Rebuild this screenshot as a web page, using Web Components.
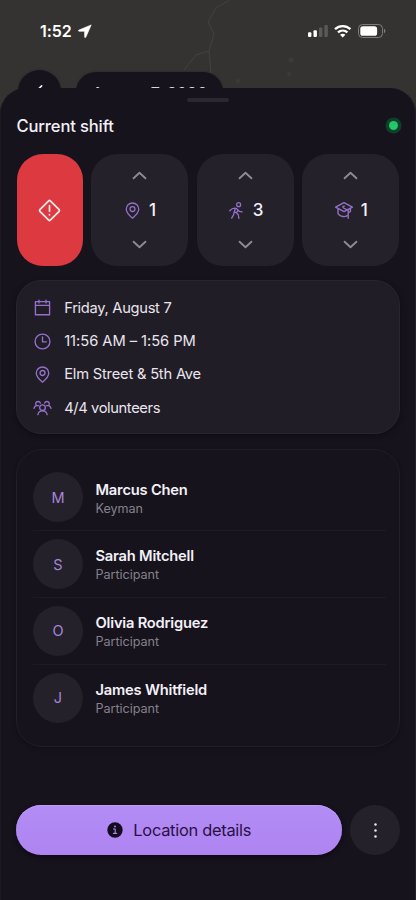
<!DOCTYPE html>
<html lang="en">
<head>
<meta charset="utf-8">
<meta name="viewport" content="width=device-width">
<title>Current shift</title>
<style>
body{margin:0;background:#17131d;font-family:Inter,"Liberation Sans",sans-serif;color:#f3f0f7}
</style>
</head>
<body>
<shift-app></shift-app>
<script>
const ICONS = {
  warn: '<path d="M10.3 2.600a1 1 0 0 1 1.400 0l7.700 7.700a1 1 0 0 1 0 1.400l-7.700 7.700a1 1 0 0 1-1.400 0l-7.700-7.700a1 1 0 0 1 0-1.400z" transform="translate(-.1 -.1) scale(1.1)"/><path d="M12 7.200v5.600M12 16v.2" stroke-width="1.600"/>',
  up: '<path d="M4.500 15.500l7.500-7 7.500 7"/>',
  down: '<path d="M4.500 8.500l7.500 7 7.500-7"/>',
  pin: '<path d="M12 22.800c3.800-3.200 8.800-7.600 8.800-12.600a8.800 8.800 0 0 0-17.600 0c0 5 5 9.400 8.800 12.600z"/><circle cx="12" cy="9.900" r="3.500"/>',
  walk: '<circle cx="15" cy="3.800" r="2.800"/><path d="M2.400 12.300c2-2.200 4.500-3.600 7.300-3.600 2.400 0 3.200 1 4 2.300 1 1.700 2.800 2.900 6.300 2.800M10.400 9.200l-1.700 5.200-.7 3.400-2.800 4.900M14 11.200l-1.900 4.200 2.400 2.600.9 5M8.900 13.900l3.200 1.500"/>',
  cap: '<path d="M.8 8.200L12 2.200l11.200 6L12 14.200zM4 10.400v6.400c2.400 4.200 10 5.400 13.600 2M12.500 6.900c-2.300.2-2.700 1.500-1.100 2.400l6.200 3.200V23M17.600 16l3-2V9.900"/>',
  calendar: '<path d="M2 3.800h20v18.400H2zM2 9h20M7 1.500v4M17 1.500v4"/>',
  clock: '<circle cx="12" cy="12" r="10.500"/><path d="M12 5.500v7h5.500"/>',
  group: '<circle cx="12" cy="12.300" r="4"/><path d="M5.500 22c.6-3.500 2.900-5.200 6.500-5.200s5.900 1.700 6.500 5.200M0 13.200c.3-2.200 1.500-3.500 3.500-3.800C1.500 7.500 2.200 3.500 5.800 3.500c1.600 0 2.800.9 3.200 2.300M24 13.200c-.3-2.200-1.500-3.500-3.500-3.800 2-1.900 1.300-5.900-2.300-5.900-1.600 0-2.800.9-3.200 2.300M3.500 9.400h3M20.500 9.400h-3"/>',
  info: '<circle cx="12" cy="12" r="11.500" fill="currentColor" stroke="none"/><path d="M9.800 10.500h2.500v6M9.600 17h5" stroke="#a98bd8" stroke-width="1.700"/><circle cx="12" cy="6.900" r="1.500" fill="#a98bd8" stroke="none"/>',
  more: '<g fill="currentColor" stroke="none"><circle cx="12" cy="3.400" r="1.750"/><circle cx="12" cy="12" r="1.750"/><circle cx="12" cy="20.600" r="1.750"/></g>',
  back: '<path d="M15 4l-8 8 8 8"/>'
};
function define(name, html) {
  const t = document.createElement('template');
  t.innerHTML = html;
  customElements.define(name, class extends HTMLElement {
    constructor() { super(); this.attachShadow({mode: 'open'}).append(t.content.cloneNode(true)); }
  });
}
customElements.define('app-icon', class extends HTMLElement {
  constructor() { super(); this.attachShadow({mode: 'open'}); }
  connectedCallback() {
    const s = this.getAttribute('size') || 18, w = this.getAttribute('weight') || 1.7;
    this.shadowRoot.innerHTML = `<style>:host{display:block;flex:none;width:${s}px;height:${s}px}svg{display:block;width:100%;height:100%;overflow:visible}</style>
    <svg viewBox="0 0 24 24" fill="none" stroke="currentColor" stroke-width="${w}" stroke-linecap="round" stroke-linejoin="round">${ICONS[this.getAttribute('name')]}</svg>`;
  }
});
define('map-backdrop', `<style>
:host{display:block;position:absolute;inset:0 0 auto 0;height:130px;background:#353331;overflow:hidden}
svg{display:block}
.chip{position:absolute;background:#17131d;box-shadow:0 0 2px #17131d88}
.back{left:18px;top:70px;width:43px;height:43px;border-radius:50%;display:grid;place-items:center}
.date{left:76px;top:72px;width:147px;height:44px;border-radius:20px;text-align:center;font-size:16px;font-weight:500;line-height:42px;white-space:nowrap;color:#d8d5dc}
</style>
<svg width="416" height="130" fill="none" stroke="#454442"><path d="M230 0l-14 8-8 14 6 12-5 17-13 4-12 15M209 51l2 22" opacity=".9"/><g fill="#3d3b39" stroke="none"><circle cx="291" cy="60" r="2.500"/><circle cx="289" cy="74" r="2"/><circle cx="238" cy="81" r="2"/></g></svg>
<div class="chip back"><app-icon name="back" size="17" weight="2.300"></app-icon></div><div class="chip date">August 7, 2026</div>`);
define('status-bar', `<style>
:host{position:relative;display:flex;justify-content:space-between;align-items:center;height:62px;padding:0 30px 0 40px;color:#fff;box-sizing:border-box}
.time{display:flex;align-items:center;gap:6px;font-size:16px;font-weight:600;letter-spacing:-.1px}
svg{display:block}
</style>
<div class="time"><span>1:52</span><svg width="14" height="14" viewBox="0 0 14 14"><path d="M13.200.9L.9 6.100c-.7.300-.6 1.200.2 1.200h5.500v5.600c0 .8 1 1 1.300.2z" fill="currentColor" stroke="currentColor" stroke-linejoin="round" stroke-width=".6"/></svg></div>
<svg width="78" height="16" viewBox="0 0 78 16" fill="#fff"><rect x="0" y="9.300" width="3.400" height="4.700" rx="1"/><rect x="5.500" y="7.200" width="3.400" height="6.800" rx="1"/><g fill="#5c5a58"><rect x="11" y="4.500" width="3.400" height="9.500" rx="1"/><rect x="16.400" y="2" width="3.400" height="12" rx="1"/></g>
<g fill="none" stroke="#fff" stroke-width="2.300"><path d="M27 6.200c4.400-4.200 11-4.200 15.400 0M30 9.400c2.700-2.500 6.700-2.500 9.400 0"/></g><path d="M32 11.700c1.600-1.400 3.800-1.400 5.400 0l-2.700 2.800z"/>
<rect x="50.500" y="1.500" width="24" height="13" rx="4" fill="none" stroke="#7e7c7a"/><rect x="52.300" y="3.200" width="16.800" height="9.600" rx="2.600"/><path d="M76 5.800c1.900.7 1.900 3.700 0 4.400z" fill="#7e7c7a"/></svg>`);
define('bottom-sheet', `<style>
:host{position:relative;display:flex;flex-direction:column;height:812px;margin-top:26px;background:#17131d;border-radius:26px 26px 0 0;box-sizing:border-box;padding:10px 16px 45px;box-shadow:inset -1px 0 #211d29,inset 1px 0 #1e1a25}
.handle{width:42px;height:4px;border-radius:2px;background:#2b2733;align-self:center;flex:none}
</style><div class="handle"></div><slot></slot>`);
define('sheet-header', `<style>
:host{display:flex;align-items:center;justify-content:space-between;height:47px;margin-bottom:5px;flex:none;font-size:16.600px;font-weight:500;letter-spacing:-.15px;padding:0 0 0 .5px}
.dot{width:9px;height:9px;border-radius:50%;background:#21c768;box-shadow:0 0 0 3.500px #0d4028;margin-right:2.500px}
</style><slot></slot><div class="dot"></div>`);
define('counter-row', `<style>:host{display:grid;grid-template-columns:66px repeat(3,1fr);gap:8.500px;height:112px;flex:none;margin:0 .7px 0 .6px}</style><slot></slot>`);
define('alert-button', `<style>:host{display:grid;place-items:center;background:#dc3a40;border-radius:26px;color:#ffeaea}</style><app-icon name="warn" size="25" weight="1.500"></app-icon>`);
customElements.define('count-stepper', class extends HTMLElement {
  constructor() { super(); this.attachShadow({mode: 'open'}); }
  connectedCallback() {
    this.shadowRoot.innerHTML = `<style>
:host{display:flex;flex-direction:column;align-items:center;justify-content:space-between;background:#25212b;border-radius:26px;padding:12px 0;box-sizing:border-box}
.arrow{color:#8f8b95}.value{display:flex;align-items:center;gap:8px;font-size:17px;font-weight:500;line-height:20px;padding-left:1px}.value app-icon{color:#9470ca}
</style><app-icon class="arrow" name="up" size="19" weight="2.300"></app-icon>
<div class="value"><app-icon name="${this.getAttribute('icon')}" size="${this.getAttribute('size')}" weight="1.800"></app-icon><span><slot></slot></span></div>
<app-icon class="arrow" name="down" size="19" weight="2.300"></app-icon>`;
  }
});
define('info-card', `<style>:host{display:flex;flex-direction:column;justify-content:space-between;height:153.500px;margin-top:14px;flex:none;border-radius:25px;background:#211d27;border:1px solid #29252f;box-sizing:border-box;padding:10px 16px 8px 16.700px;box-shadow:0 2px 5px #0c0910aa}</style><slot></slot>`);
customElements.define('info-row', class extends HTMLElement {
  constructor() { super(); this.attachShadow({mode: 'open'}); }
  connectedCallback() {
    this.shadowRoot.innerHTML = `<style>:host{display:flex;align-items:center;gap:13.500px;height:34px;font-size:14.700px;letter-spacing:-.2px;color:#e9e5ed}:host([icon=clock]){letter-spacing:-.04px}:host([icon=group]){letter-spacing:-.38px}:host([icon=calendar]){letter-spacing:-.3px}app-icon{color:#9470ca}</style><app-icon name="${this.getAttribute('icon')}" size="17" weight="1.900"></app-icon><span><slot></slot></span>`;
  }
});
define('people-card', `<style>:host{display:block;height:298px;margin-top:15px;flex:none;border-radius:26px;border:1px solid #221e28;box-sizing:border-box;padding:15px 13px 0 16px;box-shadow:0 2px 4px #0c091066;background:#17131d}</style><slot></slot>`);
define('person-row', `<style>
:host{display:flex;align-items:center;gap:12.500px;height:66.700px;border-bottom:1px solid #1f1b25;box-sizing:border-box}
:host(:last-child){border:0}
.avatar{width:50px;height:50px;border-radius:50%;background:#25212b;color:#a585d8;display:grid;place-items:center;font-size:14.500px;flex:none}
.text{padding-top:1.500px}
.name{font-size:14.700px;font-weight:600;line-height:20px;letter-spacing:-.2px}
.role{font-size:12.600px;line-height:17px;color:#85818b;letter-spacing:-.04px}
</style><div class="avatar"><slot name="initial"></slot></div><div class="text"><div class="name"><slot></slot></div><div class="role"><slot name="role"></slot></div></div>`);
define('action-bar', `<style>
:host{display:flex;gap:8.500px;height:50px;margin-top:auto;flex:none}
.main{flex:1;display:flex;align-items:center;justify-content:center;gap:10px;border-radius:25px;background:linear-gradient(#b38cf5,#ae84f1);color:#281044;font-size:16.400px;letter-spacing:-.27px;box-shadow:0 2px 5px #08050caa,inset 0 1px #bd9bf6;padding-left:1px}
.main app-icon{color:#150b20}
.more{width:50px;border-radius:50%;background:#25212b;display:grid;place-items:center;color:#eeeaf2}
</style><div class="main"><app-icon name="info" size="16"></app-icon><span><slot></slot></span></div><div class="more"><app-icon name="more" size="17"></app-icon></div>`);
define('shift-app', `<style>:host{display:block;position:relative;width:416px;height:900px;overflow:hidden}</style>
<map-backdrop></map-backdrop><status-bar></status-bar>
<bottom-sheet>
<sheet-header>Current shift</sheet-header>
<counter-row><alert-button></alert-button><count-stepper icon="pin" size="17">1</count-stepper><count-stepper icon="walk" size="17">3</count-stepper><count-stepper icon="cap" size="18">1</count-stepper></counter-row>
<info-card><info-row icon="calendar">Friday, August 7</info-row><info-row icon="clock">11:56 AM – 1:56 PM</info-row><info-row icon="pin">Elm Street &amp; 5th Ave</info-row><info-row icon="group">4/4 volunteers</info-row></info-card>
<people-card>
<person-row><span slot="initial">M</span>Marcus Chen<span slot="role">Keyman</span></person-row>
<person-row><span slot="initial">S</span>Sarah Mitchell<span slot="role">Participant</span></person-row>
<person-row><span slot="initial">O</span>Olivia Rodriguez<span slot="role">Participant</span></person-row>
<person-row><span slot="initial">J</span>James Whitfield<span slot="role">Participant</span></person-row>
</people-card>
<action-bar>Location details</action-bar>
</bottom-sheet>`);
</script>
</body>
</html>
